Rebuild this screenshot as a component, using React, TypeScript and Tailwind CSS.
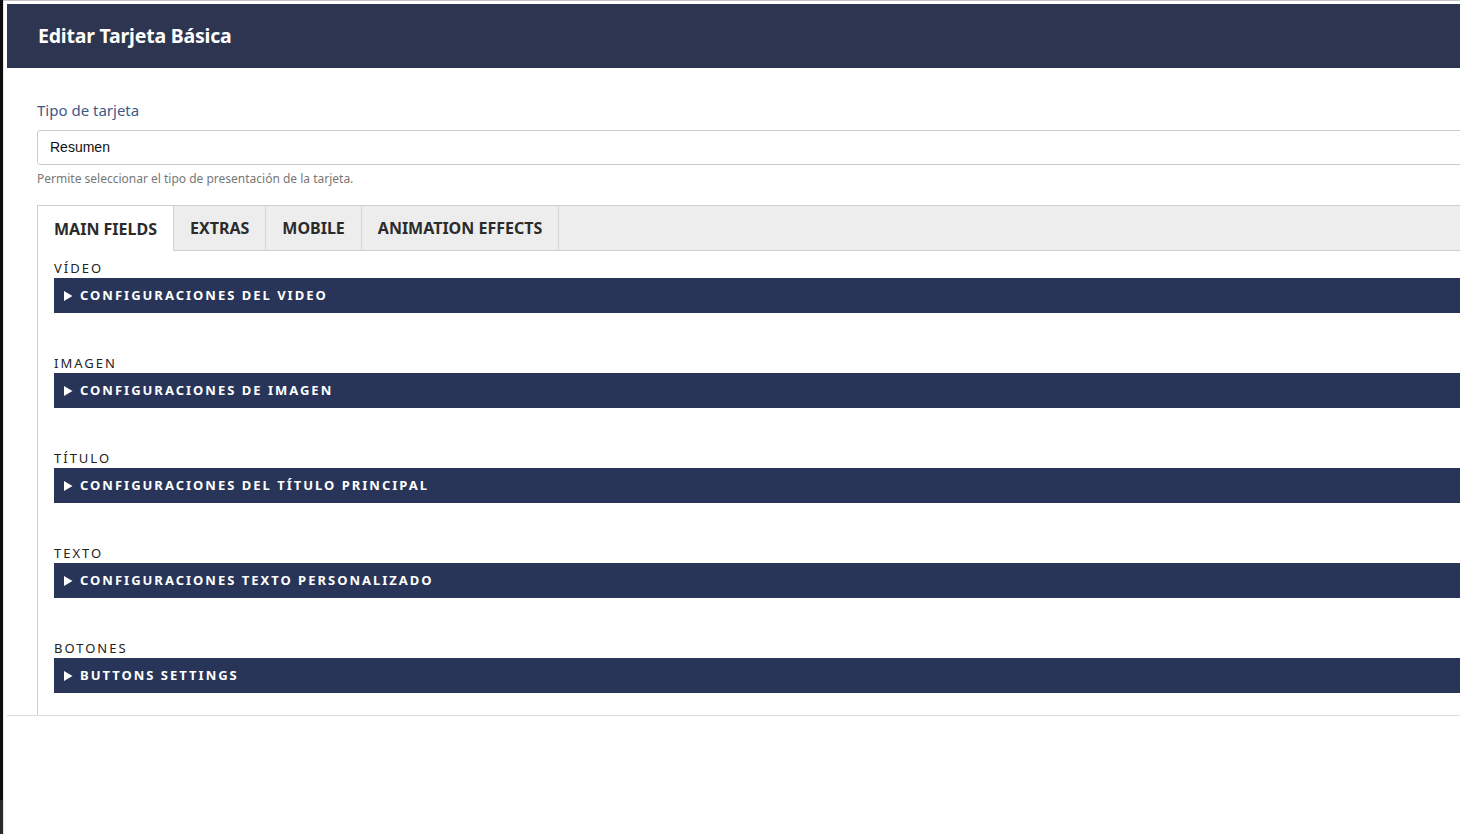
const sections = [
  { label: "VÍDEO", title: "CONFIGURACIONES DEL VIDEO" },
  { label: "IMAGEN", title: "CONFIGURACIONES DE IMAGEN" },
  { label: "TÍTULO", title: "CONFIGURACIONES DEL TÍTULO PRINCIPAL" },
  { label: "TEXTO", title: "CONFIGURACIONES TEXTO PERSONALIZADO" },
  { label: "BOTONES", title: "BUTTONS SETTINGS" },
];

const tabs = ["MAIN FIELDS", "EXTRAS", "MOBILE", "ANIMATION EFFECTS"];

export default function App() {
  return (
    <div className="flex h-[834px] w-full overflow-hidden bg-white font-['Noto_Sans',sans-serif]">
      {/* left window edge */}
      <div className="flex w-[3px] shrink-0 flex-col">
        <div className="flex-1 bg-[#0d0d0d]" />
        <div className="h-[34px] bg-[#2a2a2a]" />
      </div>
      <div className="flex min-w-0 flex-1 flex-col border-t border-[#c4c4c4] bg-white">
        <div className="flex flex-1 border-l border-[#e6e6e6] pl-[3px] pt-[3px]">
          <div className="w-[1480px] shrink-0">
            <div className="border-b border-[#dcdcdc]">
              {/* Header */}
              <header className="flex h-[64px] items-center bg-[#2d3550] pl-[31px]">
                <h1 className="text-[19.5px] font-bold tracking-[-0.2px] text-white">Editar Tarjeta Básica</h1>
              </header>

              <div className="pl-[30px] pt-[32px]">
                <label className="block text-[15px] leading-[20px] text-[#3d5a87]">Tipo de tarjeta</label>
                <div className="mt-[10px] flex h-[35px] items-center rounded-[3px] border border-[#cccccc] pl-[12px] font-['Liberation_Sans',sans-serif] text-[14px] text-[#111]">
                  Resumen
                </div>
                <p className="mt-[6px] text-[12px] leading-[16px] text-[#777]">Permite seleccionar el tipo de presentación de la tarjeta.</p>

                {/* Tabs */}
                <div className="mt-[18px] flex h-[46px] border border-[#cfcfcf] bg-[#ededed]">
                  {tabs.map((t, i) => (
                    <div
                      key={t}
                      className={`flex items-center border-r border-[#d4d4d4] px-[16px] text-[16px] font-bold text-[#2b2b2b] ${i === 0 ? "-mb-px bg-white" : ""}`}
                    >
                      {t}
                    </div>
                  ))}
                </div>

                <div className="border-l border-[#cfcfcf] pb-[22px] pl-[16px] pt-[9px]">
                  {sections.map((s, i) => (
                    <div key={s.label} className={i > 0 ? "mt-[42px]" : ""}>
                      <div className="text-[13px] leading-[17px] tracking-[2px] text-[#222]">{s.label}</div>
                      <div className="mt-[1px] flex h-[35px] items-center bg-[#283558] pl-[10px] text-[13px] font-bold tracking-[2px] text-white">
                        <svg width="9" height="10" viewBox="0 0 9 10" className="mr-[7px]">
                          <path d="M0 0 L8.5 5 L0 10 Z" fill="white" />
                        </svg>
                        {s.title}
                      </div>
                    </div>
                  ))}
                </div>
              </div>
            </div>
          </div>
        </div>
      </div>
    </div>
  );
}
